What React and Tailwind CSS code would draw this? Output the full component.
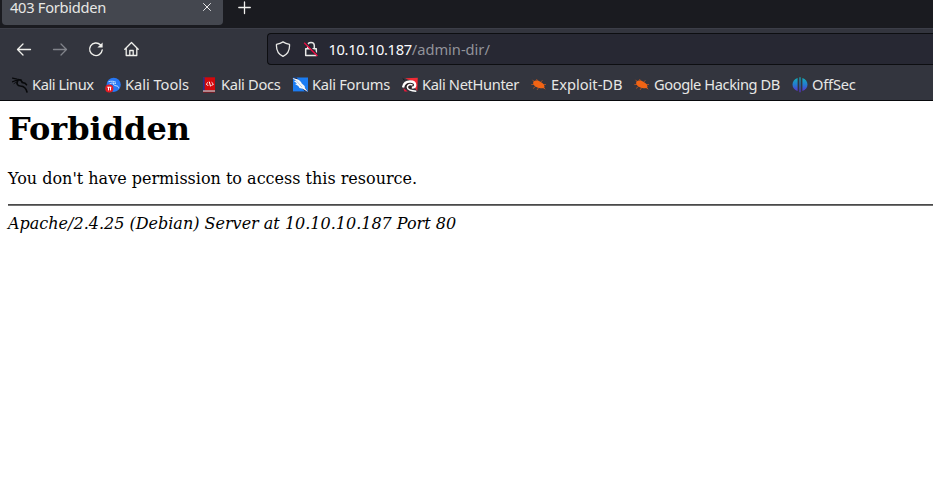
import React from "react";

const iconBox = "block h-4 w-4 shrink-0";

function KaliIcon() {
  return (
    <svg className={iconBox} viewBox="0 0 16 16" fill="none" stroke="#08090b" strokeLinecap="round">
      <path d="M.5 1.2 5 2.2 9.5 3M.5 4.8C3 3.4 6 3 9 3.3" strokeWidth="1.2" />
      <path d="M8.5 3.2 10.500 5.300M5.800 3.800C4 6.500 5.500 8.700 8.500 9c4 .3 5.700 2.300 6.500 6M10 5.500l3 .8 1.500 1.500" strokeWidth="1.600" />
      <path d="M2 6.600 4.500 5" strokeWidth=".8" />
    </svg>
  );
}

function ToolsIcon() {
  return (
    <svg className={iconBox} viewBox="0 0 16 16" fill="none">
      <circle cx="8.700" cy="7.800" r="7.100" fill="#2777f4" />
      <path d="M3.500 4.700c3-.8 5.500-.6 7.500.6M4.500 7c2.500-1.500 4.500-1 6.500-.3M8.500 5.800c-.5 1.800.5 2.700 2.500 3 2 .2 2.600 1 2.800 2.600" stroke="#c9e2ff" strokeWidth=".9" />
      <circle cx="4.300" cy="11.500" r="4.100" fill="#e51c23" />
      <path d="M2.300 10.200h4M3.500 10v3.400M5.500 10v3.400" stroke="#fff" strokeWidth="1" />
    </svg>
  );
}

function DocsIcon() {
  return (
    <svg className={iconBox} viewBox="0 0 16 16" fill="none">
      <path d="M2 .3h12v13.400H2z" fill="#d3080c" />
      <path d="M2 .3h1.700v13.400H2z" fill="#282f88" />
      <path d="M2 13.400h12v1.500H2z" fill="#cacbd0" />
      <path d="M2 14.700h12v.8H2z" fill="#a80b12" />
      <path d="M7.200 5.200 5.300 7l1.900 1.900M10.500 5.200 12.400 7l-1.900 1.900M8.300 4.700l1.200 4.700" stroke="#fff" strokeWidth="1" />
    </svg>
  );
}

function ForumsIcon() {
  return (
    <svg className={iconBox} viewBox="0 0 16 16" fill="none">
      <path d="M1 .5h15v13.900H1z" fill="#1b7cf2" />
      <path d="M1 .5h3.500L16 14.400h-3z" fill="#16244b" />
      <path d="M.5 1.200C4.300 1.300 8.500 3 9.800 6.500l2.800 2.600.4 2 3 3.900-5.300-3.200-3.200-.7-1.200-2-3.300-2 2-.5-3.200-2.500 2.300-.3z" fill="#f5f8fc" />
      <path d="m4 3.500 4.200 4.600 1.800 2" stroke="#93a6bd" strokeWidth=".6" />
    </svg>
  );
}

function NetHunterIcon() {
  return (
    <svg className={iconBox} viewBox="0 0 16 16" fill="none">
      <path d="M3 1.200 15.800.7 15.300 14 12 10 8 3.500z" fill="#f02b35" />
      <path d="M2 5.500 7 2.800l5 1.800 1.500 4.500L11 12H4z" fill="#2a2226" />
      <path d="M1 10.500C1.800 6.500 4.800 4.400 8.300 4.500c3.200.1 4.900 1.600 4.900 3.500 0 1.600-1.400 2.700-3.400 2.700" stroke="#fff" strokeWidth="2.300" />
      <path d="M10.500 8C8 6.700 5.500 8 5.300 10c-.1 2.300 3.200 4 9 4.200" stroke="#fff" strokeWidth="1.500" />
      <path d="M1.200 11 5.800 14.500H2.500z" fill="#ed1839" />
      <path d="m.7 1.500 2 1.800" stroke="#15171c" />
    </svg>
  );
}

function ExploitIcon() {
  return (
    <svg className={iconBox} viewBox="0 0 16 16" fill="none">
      <path d="M3.500 5 1.500 2.800M6.500 4 5.500 2M9.500 5l2-1.500M3 7.500H.3M4.500 9.500 2 11.500M7.500 10.800 6 13M12 7.500h3M12.300 10.300l2 2" stroke="#a24f26" strokeWidth="1" />
      <path d="M2.300 5C4 3 7 3.200 9.700 4.900c2.500 1.300 3.900 2.900 3.800 5.100-2.700 1.900-6.300 1.500-8.700-.2C2.800 8.300 1.600 6.600 2.300 5Z" fill="#f26414" />
      <path d="m12 9 2 2.500-4-.5z" fill="#f26414" />
    </svg>
  );
}

function OffSecIcon() {
  return (
    <svg className={iconBox} viewBox="0 0 16 16">
      <defs>
        <linearGradient id="offsec" x1="0" y1="0" x2="0" y2="1">
          <stop offset="0" stopColor="#12b3b8" />
          <stop offset=".5" stopColor="#247ad0" />
          <stop offset="1" stopColor="#6227cf" />
        </linearGradient>
      </defs>
      <path d="M5.600.9v13.200C2.400 13 .5 10.500.5 7.500S2.400 2 5.600.9ZM7.400.3h1.200v15H7.400ZM10.400.9c3.200 1.100 5.100 3.600 5.100 6.600s-1.900 5.500-5.100 6.600Z" fill="url(#offsec)" />
    </svg>
  );
}

const bookmarks = [
  { label: "Kali Linux", Icon: KaliIcon, width: "w-[93px] tracking-[-0.44px]" },
  { label: "Kali Tools", Icon: ToolsIcon, width: "w-24 tracking-[-0.03px]" },
  { label: "Kali Docs", Icon: DocsIcon, width: "w-[91px] tracking-[-0.33px]" },
  { label: "Kali Forums", Icon: ForumsIcon, width: "w-[110px] tracking-[-0.28px]" },
  { label: "Kali NetHunter", Icon: NetHunterIcon, width: "w-[129px] tracking-[-0.36px]" },
  { label: "Exploit-DB", Icon: ExploitIcon, width: "w-[103px]" },
  { label: "Google Hacking DB", Icon: ExploitIcon, width: "w-[158px] tracking-[-0.42px]" },
  { label: "OffSec", Icon: OffSecIcon, width: "w-20 tracking-[-0.2px]" },
];

function TabBar() {
  return (
    <div className="flex h-7 items-start bg-[#1a1b20] pl-0.5">
      <div className="flex h-[25px] w-[221px] items-start justify-between rounded-b-[4px] bg-[#44474f] pl-2 pr-[11px]">
        <span className="h-[18px] text-[14.67px] leading-[14px] tracking-[-0.28px]">403 Forbidden</span>
        <svg className="mt-[2px] h-[10px] w-[10px]" viewBox="0 0 10 10" stroke="#e8e8e9" strokeWidth="1" strokeLinecap="round">
          <path d="m1.500 1.500 7 7M8.500 1.500l-7 7" />
        </svg>
      </div>
      <svg className="ml-[15px] mt-px h-[14px] w-[14px]" viewBox="0 0 14 14" stroke="#f1f1ee" strokeWidth="1.300" strokeLinecap="round">
        <path d="M6.500 1v11.500M.8 6.500h11.500" />
      </svg>
    </div>
  );
}

function NavBar() {
  return (
    <div className="flex h-[42px] items-center border-t border-[#3c3e48] pb-px pl-4">
      <div className="flex w-[251px] items-center gap-5">
        <svg className={iconBox} viewBox="0 0 16 16" fill="none" stroke="#f0f0ec" strokeWidth="1.300" strokeLinecap="round" strokeLinejoin="round">
          <path d="M14.500 8.500H1.500M7 3 1.500 8.500 7 14" />
        </svg>
        <svg className={iconBox} viewBox="0 0 16 16" fill="none" stroke="#81838a" strokeWidth="1.300" strokeLinecap="round" strokeLinejoin="round">
          <path d="M1.500 8.500h13M9 3l5.500 5.500L9 14" />
        </svg>
        <svg className={iconBox} viewBox="0 0 16 16" fill="none" stroke="#f0f0ec" strokeWidth="1.400" strokeLinecap="round">
          <path d="M12.400 3.800A6.300 6.300 0 1 0 14.200 9" />
          <path d="M14.600 1.400v5.200H9.400z" fill="#f0f0ec" stroke="none" />
        </svg>
        <svg className={iconBox} viewBox="0 0 16 16" fill="none" stroke="#f0f0ec" strokeWidth="1.300" strokeLinecap="round" strokeLinejoin="round">
          <path d="M.8 8.200 7.500 1.500l6.700 6.700M2.200 7.300v7.200h10.600V7.300M5.800 14.300V9.500h3.400v4.800" />
        </svg>
      </div>
      <div className="flex h-8 flex-1 items-center rounded-l-[4px] border border-r-0 border-[#0d0e11] bg-[#272833] pl-[7px]">
        <svg className={iconBox} viewBox="0 0 16 16" fill="none" stroke="#e9e9e7" strokeWidth="1.300" strokeLinejoin="round">
          <path d="M8 .9c2 1.300 4.100 2 6.500 2.500.4 5.500-1.900 9.900-6.500 12-4.600-2.100-6.900-6.500-6.500-12C3.900 2.900 6 2.200 8 .9Z" />
        </svg>
        <svg className="ml-3 block h-4 w-4 shrink-0" viewBox="0 0 16 16" fill="none">
          <path d="M4.700 7V4.700C4.700.4 11.300.4 11.300 4.700V7.500M2.700 7.800h10.600v6.700H2.700z" stroke="#e9e9e7" strokeWidth="1.500" strokeLinejoin="round" />
          <path d="M2.700 1.700 15 14" stroke="#272833" strokeWidth="1.500" />
          <path d="M1.200 1.800 14.400 15" stroke="#f00b43" strokeWidth="1.300" />
        </svg>
        <span className="-mt-px ml-[9.500px] text-[14.67px] tracking-[-0.33px] text-[#fbfbfe]">
          10.10.10.187<span className="tracking-[-0.02px] text-[#92939a]">/admin-dir/</span>
        </span>
      </div>
    </div>
  );
}

export default function App() {
  return (
    <div className="flex h-[489px] w-[933px] flex-col overflow-hidden bg-white">
      <header className="h-[101px] shrink-0 border-b border-[#08090c] bg-[#33353e] font-['Noto_Sans',sans-serif] text-[#e7e7e5]">
        <TabBar />
        <NavBar />
        <nav className="flex h-[30px] items-center pl-3">
          {bookmarks.map(({ label, Icon, width }) => (
            <div key={label} className={"flex shrink-0 items-center gap-1 whitespace-nowrap text-[14.67px] " + width}>
              <Icon />
              <span className="-mt-0.5">{label}</span>
            </div>
          ))}
        </nav>
      </header>
      <main className="pl-2 pt-[9px] font-['DejaVu_Serif',serif] text-base leading-[19px] text-black">
        <h1 className="text-[32px] font-bold leading-[38px]">Forbidden</h1>
        <p className="mt-[21px]">You don't have permission to access this resource.</p>
        <hr className="mt-4 h-0.5 border-0 border-t border-[#4a4a4a] bg-[#737373]" />
        <address className="mt-2 italic">Apache/2.4.25 (Debian) Server at 10.10.10.187 Port 80</address>
      </main>
    </div>
  );
}
